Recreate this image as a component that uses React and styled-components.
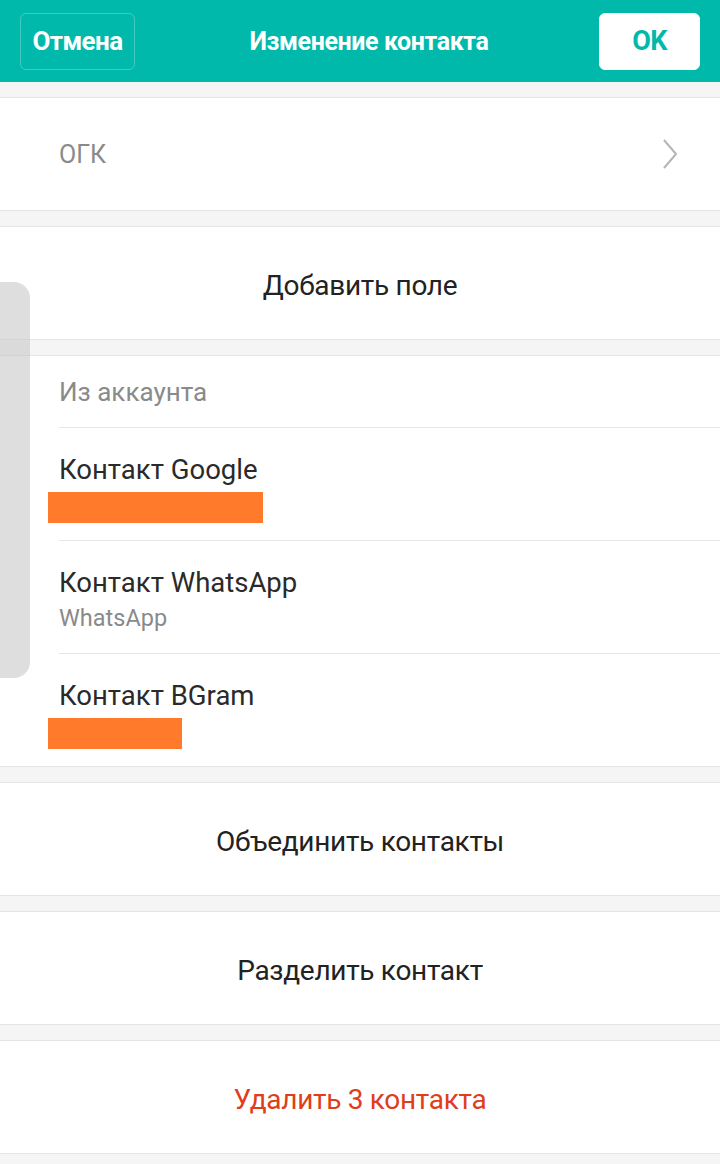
import React from "react";
import styled, { createGlobalStyle } from "styled-components";

const GlobalStyle = createGlobalStyle`
  html, body {
    margin: 0;
    padding: 0;
    background: #f5f5f5;
    font-family: Roboto, "Noto Sans", sans-serif;
  }
`;

const Screen = styled.div`
  position: relative;
  width: 720px;
  height: 1164px;
  overflow: hidden;
  background: #f5f5f5;
`;

const Header = styled.header`
  height: 82px;
  background: #00b9ab;
  display: flex;
  align-items: center;
  justify-content: space-between;
  padding: 0 20px;
  box-sizing: border-box;
`;

const HeaderButton = styled.button`
  height: 57px;
  padding: 0;
  border-radius: 6px;
  font-family: Roboto, sans-serif;
  font-weight: 700;
  font-size: ${(p) => (p.$primary ? "27px" : "26px")};
  border: 1px solid ${(p) => (p.$primary ? "#ffffff" : "rgba(255,255,255,0.25)")};
  background: ${(p) => (p.$primary ? "#ffffff" : "transparent")};
  color: ${(p) => (p.$primary ? "#00b9ab" : "#ffffff")};
  width: ${(p) => (p.$primary ? "101px" : "115px")};
  letter-spacing: -0.6px;
`;

const Title = styled.h1`
  margin: 0;
  font-size: 25px;
  font-weight: 700;
  color: #ffffff;
  letter-spacing: -0.4px;
  padding-left: 4px;
`;

const Section = styled.section`
  margin-top: 15px;
  background: #ffffff;
  border-top: 1px solid #e4e4e4;
  border-bottom: 1px solid #e4e4e4;
`;

const NavRow = styled.div`
  height: 112px;
  display: flex;
  align-items: center;
  justify-content: space-between;
  padding: 0 42px 0 59px;
  font-size: 25px;
  color: #8a8a8a;
`;

const ActionRow = styled.div`
  height: 112px;
  display: flex;
  align-items: center;
  justify-content: center;
  padding-top: 4px;
  box-sizing: border-box;
  font-size: 28px;
  color: ${(p) => (p.$danger ? "#e03d1a" : "#222222")};
  letter-spacing: -0.3px;
`;

const GroupLabel = styled.div`
  height: 71px;
  display: flex;
  align-items: center;
  padding-left: 59px;
  font-size: 26px;
  color: #8a8a8a;
`;

const AccountRow = styled.div`
  height: 113px;
  margin-left: 59px;
  border-top: 1px solid #e6e6e6;
  display: flex;
  flex-direction: column;
  padding-top: 26px;
  box-sizing: border-box;
`;

const AccountName = styled.div`
  font-size: 27.5px;
  color: #2a2a2a;
  line-height: 32px;
`;

const AccountSub = styled.div`
  margin-top: 5px;
  font-size: 23.5px;
  color: #8a8a8a;
  line-height: 28px;
`;

const Redaction = styled.div`
  width: ${(p) => p.$w}px;
  height: 31px;
  margin: 6px 0 0 -11px;
  background: #ff7a2b;
`;

const ScrollThumb = styled.div`
  position: absolute;
  left: 0;
  top: 282px;
  width: 30px;
  height: 396px;
  border-radius: 0 16px 16px 0;
  background: rgba(200, 200, 200, 0.6);
`;

const Chevron = () => (
  <svg width="16" height="30" viewBox="0 0 16 30" fill="none">
    <path d="M2 1 L14 15 L2 29" stroke="#b5b5b5" strokeWidth="2" />
  </svg>
);

const accounts = [
  { name: "Контакт Google", redact: 215 },
  { name: "Контакт WhatsApp", sub: "WhatsApp" },
  { name: "Контакт BGram", redact: 134 },
];

export default function App() {
  return (
    <>
      <GlobalStyle />
      <Screen>
        <Header>
          <HeaderButton>Отмена</HeaderButton>
          <Title>Изменение контакта</Title>
          <HeaderButton $primary>OK</HeaderButton>
        </Header>

        <Section>
          <NavRow>
            <span>ОГК</span>
            <Chevron />
          </NavRow>
        </Section>

        <Section>
          <ActionRow>Добавить поле</ActionRow>
        </Section>

        <Section>
          <GroupLabel>Из аккаунта</GroupLabel>
          {accounts.map((a) => (
            <AccountRow key={a.name}>
              <AccountName>{a.name}</AccountName>
              {a.sub && <AccountSub>{a.sub}</AccountSub>}
              {a.redact && <Redaction $w={a.redact} />}
            </AccountRow>
          ))}
        </Section>

        <Section>
          <ActionRow>Объединить контакты</ActionRow>
        </Section>

        <Section>
          <ActionRow>Разделить контакт</ActionRow>
        </Section>

        <Section>
          <ActionRow $danger>Удалить 3 контакта</ActionRow>
        </Section>

        <ScrollThumb />
      </Screen>
    </>
  );
}
